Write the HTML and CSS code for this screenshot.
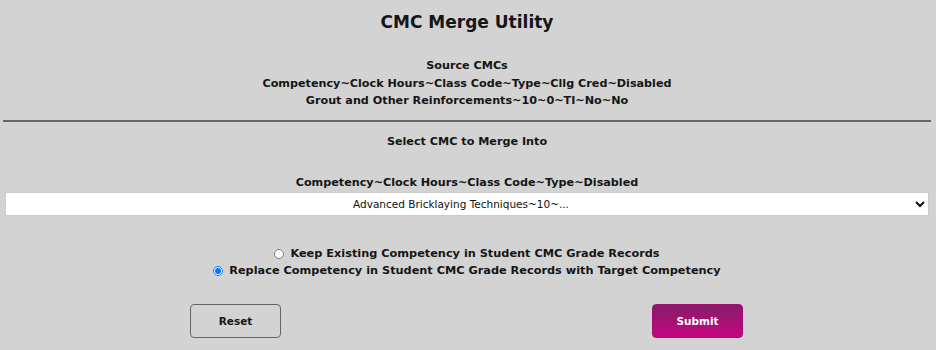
FILE: index.html
```html
<!DOCTYPE html>
<html lang="en">
<head>
    <meta charset="UTF-8">
    <title>CMC Merge Utility</title>
    <link rel="stylesheet" href="styles.css">
</head>
<body>
    <div class="page">
        <h1 class="title">CMC Merge Utility</h1>

        <!-- Source -->
        <div class="source">
            <div>Source CMCs</div>
            <div>Competency~Clock Hours~Class Code~Type~Cllg Cred~Disabled</div>
            <div>Grout and Other Reinforcements~10~0~TI~No~No</div>
        </div>

        <hr class="divider">

        <!-- Target -->
        <div class="target">
            <div class="target-label">Select CMC to Merge Into</div>
            <div class="target-head">Competency~Clock Hours~Class Code~Type~Disabled</div>
            <select class="target-select">
                <option>Advanced Bricklaying Techniques~10~...</option>
            </select>
        </div>

        <div class="options">
            <label class="option"><input type="radio" name="mode"> Keep Existing Competency in Student CMC Grade Records</label>
            <label class="option"><input type="radio" name="mode" checked> Replace Competency in Student CMC Grade Records with Target Competency</label>
        </div>

        <div class="actions">
            <button class="btn btn-reset">Reset</button>
            <button class="btn btn-submit">Submit</button>
        </div>
    </div>
</body>
</html>
```

FILE: styles.css
```css
* {
    box-sizing: border-box;
}

body {
    margin: 0;
    background: #d3d3d3;
    color: #151515;
    font-family: 'DejaVu Sans', sans-serif;
    font-weight: bold;
}

.page {
    padding: 0 7px 0 5px;
}

.title {
    margin: 0;
    padding-top: 9px;
    text-align: center;
    font-size: 17px;
    line-height: 26px;
}

.source {
    margin-top: 22px;
    text-align: center;
    font-size: 11.2px;
    line-height: 17.5px;
}

.divider {
    margin: 10px -2px 0 -2px;
    border: 0;
    border-top: 2px solid #666;
}

.target {
    text-align: center;
    font-size: 11.2px;
}

.target-label {
    margin-top: 11px;
    line-height: 18px;
}

.target-head {
    margin-top: 23px;
    line-height: 18px;
}

.target-select {
    display: block;
    width: 100%;
    height: 24px;
    margin-top: 0;
    border: 1px solid #ccc;
    background: #fff;
    font-family: 'DejaVu Sans', sans-serif;
    font-size: 10.5px;
    text-align: center;
    text-align-last: center;
    color: #111;
}

.options {
    margin-top: 29px;
    display: flex;
    flex-direction: column;
    align-items: center;
    font-size: 11.3px;
}

.option {
    line-height: 17px;
}

.option input {
    width: 10px;
    height: 10px;
    margin: 0 2px 0 0;
    vertical-align: middle;
}

.actions {
    margin-top: 25px;
    display: flex;
    padding-left: 185px;
    gap: 371px;
}

.btn {
    width: 91px;
    height: 34px;
    border-radius: 4px;
    font-family: 'DejaVu Sans', sans-serif;
    font-weight: bold;
    font-size: 10.5px;
    cursor: pointer;
}

.btn-reset {
    background: #d3d3d3;
    border: 1px solid #666;
    color: #151515;
}

.btn-submit {
    background: linear-gradient(#851e67, #c5067f);
    border: 1px solid #a10d74;
    color: #fff;
}
```
